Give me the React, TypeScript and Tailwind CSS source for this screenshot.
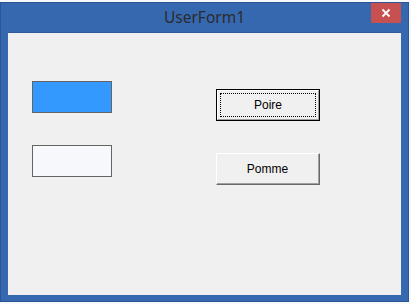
import React from "react";

export default function App() {
  return (
    <div className="w-[411px] h-[304px] bg-[#f7f8fa] pt-[2px] overflow-hidden">
      <div className="w-[409px] h-[300px] border border-[#2a5596] bg-[#3668b0] px-[7px] pb-[6px] flex flex-col">
        <div className="relative h-[29px] shrink-0 flex items-center justify-center">
          <span
            className="text-[15.5px] text-[#2b2b2b] leading-none"
            style={{ fontFamily: '"Noto Sans", "Open Sans", sans-serif' }}
          >
            UserForm1
          </span>
          <div className="absolute top-0 right-0 w-[30px] h-[20px] bg-[#c75050] flex items-center justify-center">
            <svg width="10" height="10" viewBox="0 0 10 10">
              <path d="M1.5 1.5 L8.5 8.5 M8.5 1.5 L1.5 8.5" stroke="#ffffff" strokeWidth="1.8" />
            </svg>
          </div>
        </div>
        <div className="flex-1 bg-[#f0f0f0] border-t border-[#2f5a9c] flex items-start">
          <div className="pl-[24px] pt-[48px] flex flex-col gap-[32px]">
            <div className="w-[80px] h-[32px] bg-[#3399ff] border border-[#646464]" />
            <div className="w-[80px] h-[32px] bg-[#f7f8fc] border border-[#646464]" />
          </div>
          <div
            className="ml-[104px] pt-[56px] flex flex-col gap-[32px] text-[12px] text-black"
            style={{ fontFamily: '"Liberation Sans", Arial, sans-serif' }}
          >
            <div className="w-[104px] h-[32px] border border-black bg-[#f0f0f0]">
              <div className="w-full h-full border-t border-l border-white border-r border-b border-r-[#a0a0a0] border-b-[#a0a0a0] p-[2px]">
                <div className="w-full h-full border border-dotted border-black flex items-center justify-center">
                  Poire
                </div>
              </div>
            </div>
            <div className="w-[104px] h-[32px] border-t border-l border-white border-r border-b border-r-[#696969] border-b-[#696969] bg-[#f0f0f0]">
              <div className="w-full h-full border-r border-b border-[#a0a0a0] flex items-center justify-center">
                Pomme
              </div>
            </div>
          </div>
        </div>
      </div>
    </div>
  );
}
